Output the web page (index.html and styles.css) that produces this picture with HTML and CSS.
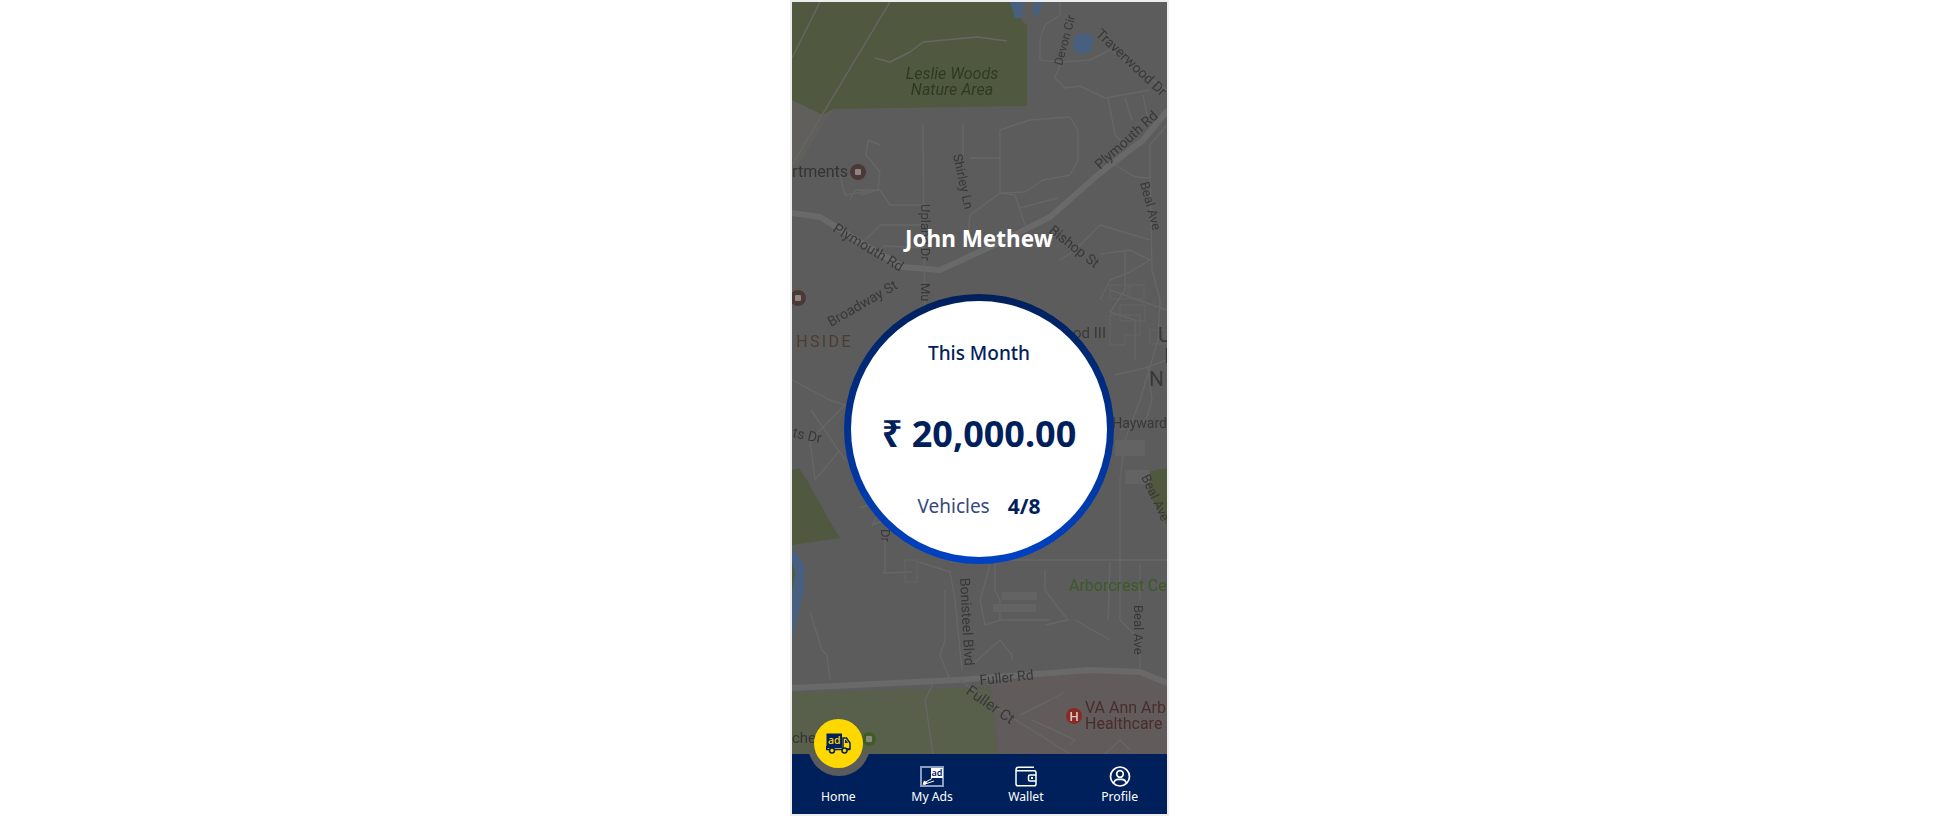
FILE: index.html
```html
<!DOCTYPE html>
<html lang="en">
<head>
<meta charset="utf-8">
<title>Home</title>
<link rel="stylesheet" href="styles.css">
</head>
<body>
<main class="phone">
  <section class="screen">
    <svg class="map" viewBox="792 2 375 752" xmlns="http://www.w3.org/2000/svg" aria-hidden="true">
      <rect x="792" y="2" width="375" height="752" class="land"/>
      <polygon class="land-light" points="792,100 823,115 833,109 792,175"/>
      <polygon class="park" points="792,2 1010,2 1023,22 1027,25 1027,106 833,109 823,115 792,100"/>
      <polygon class="park" points="792,470 799,468 807,480 829,520 840,538 792,545"/>
      <polygon class="park" points="1147,472 1167,468 1167,525 1160,515 1150,495"/>
      <polygon class="park-pale" points="792,693 990,687 998,754 792,754"/>
      <polygon class="pink" points="990,683 1090,672 1140,674 1167,685 1167,754 1000,754"/>
      <polygon class="water" points="1010,2 1023,2 1022,18 1015,18"/>
      <polygon class="water" points="1035,2 1043,2 1037,18 1033,14"/>
      <path class="water" d="M1074 38 Q1085 29 1094 37 Q1092 45 1090 52 Q1078 56 1073 48Z"/>
      <path class="water" d="M792 550 L800 557 L805 567 L804 590 L792 640Z"/>
      <path class="park" d="M792 562 L795 573 L792 593Z"/>

      <g class="road-major">
        <polyline points="792,213 820,217 857,240 903,267 940,270 990,247 1050,217 1100,173 1143,140 1168,110"/>
        <polyline points="792,688 957,680 1090,670 1140,672 1167,683"/>
      </g>
      <g class="road">
        <polyline points="820,2 792,58"/>
        <polyline points="890,2 792,165"/>
        <polyline points="875,58 890,62 910,52 923,42 977,37 1007,41"/>
        <polyline points="923,125 925,340"/>
        <polyline points="963,124 963,157"/>
        <polyline points="970,158 1000,158"/>
        <polyline points="1000,130 1000,193 1025,192 1043,180 1070,175"/>
        <polyline points="1000,130 1030,120 1070,117 1078,130 1078,160 1070,175"/>
        <polyline points="970,215 1000,193 1015,195 1025,225"/>
        <polyline points="970,215 968,235 985,250"/>
        <polyline points="1020,208 1050,200 1058,198"/>
        <polyline points="1060,2 1060,15 1045,25 1040,40 1040,60 1060,62 1090,60 1110,50 1167,90"/>
        <polyline points="1060,65 1055,78 1065,88 1080,86 1105,98 1150,90"/>
        <polyline points="1108,98 1115,135 1125,145"/>
        <polyline points="1125,98 1132,120"/>
        <polyline points="1143,95 1148,120"/>
        <polyline points="1115,165 1135,177 1150,178"/>
        <polyline points="1150,178 1150,145 1167,125"/>
        <polyline points="1150,178 1152,270 1160,300 1158,340 1140,400 1125,440 1120,480 1120,620 1140,640 1140,668"/>
        <polyline points="1150,240 1100,225 1075,250 1060,260"/>
        <polyline points="880,145 868,140 866,155 880,172 878,190 860,195"/>
        <polyline points="850,200 855,190 880,190 890,205 925,205"/>
        <polyline points="840,175 845,195 875,190"/>
        <polyline points="865,240 880,225 925,225"/>
        <polyline points="870,255 885,246 925,248"/>
        <polyline points="1100,254 1130,250 1150,260 1130,272 1110,280 1100,300"/>
        <polyline points="1125,250 1125,290 1110,312 1135,320 1135,360"/>
        <polyline points="1110,290 1167,310"/>
        <polyline points="1115,375 1145,368 1167,360"/>
        <polyline points="1148,368 1152,400 1146,420 1120,430"/>
        <polyline points="792,380 830,400 845,405 810,440 815,480 840,450"/>
        <polyline points="811,410 845,460"/>
        <polyline points="860,508 868,505 878,515 872,525 885,520 900,508"/>
        <polyline points="885,530 885,570 883,573 912,572"/>
        <polyline points="919,562 950,572 955,600 962,670"/>
        <polyline points="950,562 1000,560 1167,560"/>
        <polyline points="990,565 980,600 985,625 1000,620 1050,620"/>
        <polyline points="995,562 995,590 1000,600 1000,620"/>
        <polyline points="1045,570 1045,590 1060,610 1068,620 1045,625"/>
        <polyline points="1110,562 1108,620"/>
        <polyline points="1075,620 1110,640"/>
        <polyline points="1140,565 1140,600"/>
        <polyline points="972,665 1000,640 1012,655 1012,660"/>
        <polyline points="960,680 1000,710 1070,754"/>
        <polyline points="1020,715 1050,700 1065,692"/>
        <polyline points="1032,720 1075,740 1070,745"/>
        <polyline points="1105,754 1120,740 1130,750"/>
        <polyline points="810,612 822,650 827,655 830,680"/>
        <polyline points="935,680 925,700 933,754"/>
        <polyline points="950,680 940,655 945,640 945,590"/>
      </g>
      <g class="block">
        <rect x="1002" y="592" width="35" height="8"/>
        <rect x="993" y="604" width="43" height="8"/>
        <rect x="1115" y="440" width="30" height="16"/>
        <rect x="1125" y="470" width="25" height="14"/>
      </g>
      <g class="outline">
        <path d="M1110 315h30v20h-15v10h-15z"/>
        <path d="M1120 305h25v16h-25z"/>
        <path d="M1150 330h15v14h-15z"/>
        <path d="M1110 285h18v14h-18z"/>
        <path d="M1130 285h14v14h-14z"/>
        <path d="M905 560h12v22h-12z"/>
      </g>

      <g class="label">
        <text class="t14" x="1100" y="170" transform="rotate(-42 1100 170)">Plymouth Rd</text>
        <text class="t14" x="1095" y="35" transform="rotate(43 1095 35)">Traverwood Dr</text>
        <text class="t12" x="1062" y="66" transform="rotate(-75 1062 66)">Devon Cir</text>
        <text class="t13" x="953" y="155" transform="rotate(78 953 155)">Shirley Ln</text>
        <text class="t13" x="921" y="204" transform="rotate(90 921 204)">Upland Dr</text>
        <text class="t14" x="832" y="231" transform="rotate(31 832 231)">Plymouth Rd</text>
        <text class="t14" x="1048" y="232" transform="rotate(38 1048 232)">Bishop St</text>
        <text class="t13" x="1140" y="183" transform="rotate(75 1140 183)">Beal Ave</text>
        <text class="t14" x="831" y="327" transform="rotate(-30 831 327)">Broadway St</text>
        <text class="t13" x="921" y="283" transform="rotate(90 921 283)">Mu</text>
        <text class="t14" x="792" y="437" transform="rotate(12 792 437)">ts Dr</text>
        <text class="t13" x="881" y="529" transform="rotate(90 881 529)">Dr</text>
        <text class="t14 end" x="1167" y="428">Hayward</text>
        <text class="t13" x="1141" y="477" transform="rotate(65 1141 477)">Beal Ave</text>
        <text class="t14" x="960" y="578" transform="rotate(87 960 578)">Bonisteel Blvd</text>
        <text class="t13" x="1134" y="605" transform="rotate(90 1134 605)">Beal Ave</text>
        <text class="t14" x="980" y="685" transform="rotate(-6 980 685)">Fuller Rd</text>
        <text class="t15" x="965" y="693" transform="rotate(35 965 693)">Fuller Ct</text>
        <text class="t15 end" x="1106" y="338">od III</text>
        <text class="t20" x="1158" y="342">U</text>
        <text class="t20" x="1164" y="363">I</text>
        <text class="t20" x="1149" y="386">N</text>
      </g>
      <text class="t16 italic park-label" x="952" y="79">Leslie Woods</text>
      <text class="t16 italic park-label" x="952" y="95">Nature Area</text>
      <text class="t16 label-dark end" x="848" y="177">rtments</text>
      <text class="district end" x="853" y="347">HSIDE</text>
      <text class="t16 green-label" x="1069" y="591">Arborcrest Ce</text>
      <text class="t16 hospital" x="1085" y="713">VA Ann Arb</text>
      <text class="t16 hospital" x="1085" y="729">Healthcare</text>
      <text class="t15 label-dark" x="792" y="743">chel</text>

      <g class="poi-brown">
        <circle cx="858" cy="172" r="8"/>
        <circle cx="798" cy="298" r="8"/>
      </g>
      <rect class="poi-dot" x="855" y="169" width="6" height="6" rx="1"/>
      <rect class="poi-dot" x="795" y="295" width="6" height="6" rx="1"/>
      <circle class="poi-green" cx="869" cy="739" r="7"/>
      <rect class="poi-dot" x="866" y="736" width="6" height="6" rx="1"/>
      <circle class="poi-red" cx="1074" cy="716" r="8"/>
      <text class="poi-h" x="1074" y="721">H</text>
    </svg>

    <div class="content">
      <h1 class="name">John Methew</h1>
      <div class="ring">
        <div class="dial">
          <p class="period">This Month</p>
          <p class="amount">₹ 20,000.00</p>
          <p class="vehicles"><span class="vehicles-label">Vehicles</span><strong class="vehicles-count">4/8</strong></p>
        </div>
      </div>
    </div>
  </section>

  <nav class="nav">
    <span class="halo"></span>
    <a class="nav-item"><span class="nav-icon"></span><span class="nav-label">Home</span></a>
    <a class="nav-item">
      <svg class="nav-icon" width="24" height="21" viewBox="0 0 24 21" aria-hidden="true">
        <rect x="1" y="1" width="22" height="19" fill="none" stroke="#8e9cc0" stroke-width="2"/>
        <rect x="11" y="2" width="12" height="10" fill="#fff"/>
        <text class="ad-mini" x="17" y="10">ad</text>
        <path d="M4 17 L12 12.5 M5 18 L14 15" stroke="#fff" stroke-width="1" fill="none"/>
        <path d="M2.5 18.5 L4 14.5 L7 16.5 L5 19Z" fill="#fff"/>
      </svg>
      <span class="nav-label">My Ads</span>
    </a>
    <a class="nav-item">
      <svg class="nav-icon" width="22" height="21" viewBox="0 0 22 21" aria-hidden="true">
        <path d="M19 1.2 H3.5 Q1 1.2 1 4 V18 Q1 19.8 3 19.8 H19.3 Q21 19.8 21 18 V6.5 Q21 4.8 19.3 4.8 H1.5" fill="none" stroke="#fff" stroke-width="1.5"/>
        <path d="M21 9 H15 Q13.5 9 13.5 10.5 V13.5 Q13.5 15 15 15 H21" fill="none" stroke="#fff" stroke-width="1.5"/>
        <rect x="16" y="11" width="2" height="2" fill="#fff"/>
      </svg>
      <span class="nav-label">Wallet</span>
    </a>
    <a class="nav-item">
      <svg class="nav-icon" width="22" height="21" viewBox="0 0 22 21" aria-hidden="true">
        <circle cx="11" cy="10.5" r="9.5" fill="none" stroke="#fff" stroke-width="1.7"/>
        <circle cx="11" cy="8" r="3.3" fill="none" stroke="#fff" stroke-width="1.7"/>
        <path d="M4.5 17 Q6 13.3 9 13.3 H13 Q16 13.3 17.5 17" fill="none" stroke="#fff" stroke-width="1.7"/>
      </svg>
      <span class="nav-label">Profile</span>
    </a>
  </nav>

  <button class="fab" type="button" aria-label="Home">
    <svg class="truck" width="25" height="21" viewBox="0 0 25 21" aria-hidden="true">
      <rect x="0.5" y="0.5" width="15.5" height="14.5" fill="#00205b"/>
      <text class="ad-truck" x="8.2" y="11">ad</text>
      <path d="M17 5 H20.5 L24 10 V16 H17Z" fill="none" stroke="#00205b" stroke-width="1.5"/>
      <path d="M19 7 H20 L22 10 H19Z" fill="#00205b"/>
      <path d="M0.7 13 V16.5 H24" fill="none" stroke="#00205b" stroke-width="1.5"/>
      <circle cx="6" cy="17.5" r="2.5" fill="#ffd800" stroke="#00205b" stroke-width="1.5"/>
      <circle cx="18.5" cy="17.5" r="2.5" fill="#ffd800" stroke="#00205b" stroke-width="1.5"/>
    </svg>
  </button>
</main>
</body>
</html>
```

FILE: styles.css
```css
* { box-sizing: border-box; }
html, body { margin: 0; height: 100%; }
body {
  display: flex;
  align-items: center;
  justify-content: center;
  height: 816px;
  overflow: hidden;
  background: #fff;
  font-family: "Noto Sans", "Open Sans", "DejaVu Sans", sans-serif;
}
.phone {
  position: relative;
  display: flex;
  flex-direction: column;
  width: 375px;
  height: 812px;
  box-shadow: 0 0 0 2px #eeeeee;
}
.screen {
  position: relative;
  flex: 1;
  overflow: hidden;
}
.map {
  position: absolute;
  inset: 0;
  width: 100%;
  height: 100%;
  filter: blur(0.6px);
  font-family: Roboto, sans-serif;
}
.land { fill: #5c5c5c; }
.land-light { fill: #605f5c; }
.park { fill: #50593f; }
.park-pale { fill: #585f4b; }
.pink { fill: #625b5c; }
.water { fill: #48607f; }
.road-major polyline { fill: none; stroke: #696969; stroke-width: 6; }
.road polyline { fill: none; stroke: #666666; stroke-width: 1.4; stroke-linejoin: round; }
.block rect { fill: #636363; }
.outline path { fill: none; stroke: #646464; stroke-width: 1; }
.label text { fill: #383838; }
.t12 { font-size: 12px; }
.t13 { font-size: 13px; }
.t14 { font-size: 14px; }
.t15 { font-size: 15px; }
.t16 { font-size: 16px; }
.t20 { font-size: 21px; }
.end { text-anchor: end; }
.italic { font-style: italic; text-anchor: middle; }
.park-label { fill: #2c3b1d; }
.label-dark { fill: #343434; }
.district { font-size: 16px; letter-spacing: 2.4px; fill: #4a3c33; }
.green-label { fill: #3c5a26; }
.hospital { fill: #4a2c2c; }
.poi-brown circle { fill: #4a3936; }
.poi-dot { fill: #8c8582; }
.poi-green { fill: #3f5e26; }
.poi-red { fill: #8a2a24; }
.poi-h { fill: #d8c8c8; font-size: 13px; font-weight: 500; text-anchor: middle; }

.content {
  position: relative;
  display: flex;
  flex-direction: column;
  align-items: center;
  padding-top: 222px;
}
.name {
  margin: 0 0 40px;
  font-size: 22.5px;
  line-height: 30px;
  font-weight: 700;
  color: #fff;
}
.ring {
  width: 270px;
  height: 270px;
  padding: 7px;
  border-radius: 50%;
  background: linear-gradient(180deg, #00205b 0%, #0042c4 100%);
}
.dial {
  display: flex;
  flex-direction: column;
  align-items: center;
  width: 100%;
  height: 100%;
  padding-top: 38px;
  border-radius: 50%;
  background: #fff;
  color: #00205b;
}
.period {
  margin: 0 0 42px;
  font-size: 19px;
  line-height: 28px;
  font-weight: 500;
}
.amount {
  margin: 0 0 33px;
  font-size: 36px;
  line-height: 50px;
  font-weight: 700;
}
.vehicles {
  display: flex;
  gap: 18px;
  align-items: center;
  margin: 0;
  font-size: 19px;
  line-height: 28px;
}
.vehicles-label { color: #36487f; }
.vehicles-count { font-size: 21px; font-weight: 700; }

.nav {
  position: relative;
  display: grid;
  grid-template-columns: repeat(4, 1fr);
  height: 60px;
  padding-top: 12px;
  overflow: hidden;
  background: #00205b;
}
.halo {
  position: absolute;
  left: 16px;
  top: -40px;
  width: 62px;
  height: 62px;
  border-radius: 50%;
  background: #5b5b5b;
}
.nav-item {
  position: relative;
  display: flex;
  flex-direction: column;
  align-items: center;
  gap: 2px;
  color: #fff;
}
.nav-icon { display: block; height: 21px; }
.nav-label { font-size: 12.2px; line-height: 15px; }
.ad-mini { font: 600 9px "Noto Sans", sans-serif; fill: #00205b; text-anchor: middle; }
.ad-truck { font: 500 10.5px "Noto Sans", sans-serif; fill: #ffd800; text-anchor: middle; }
.fab {
  position: absolute;
  left: 22px;
  top: 717px;
  display: flex;
  align-items: center;
  justify-content: center;
  width: 49px;
  height: 49px;
  padding: 0;
  border: 0;
  border-radius: 50%;
  background: #ffd800;
}
```
